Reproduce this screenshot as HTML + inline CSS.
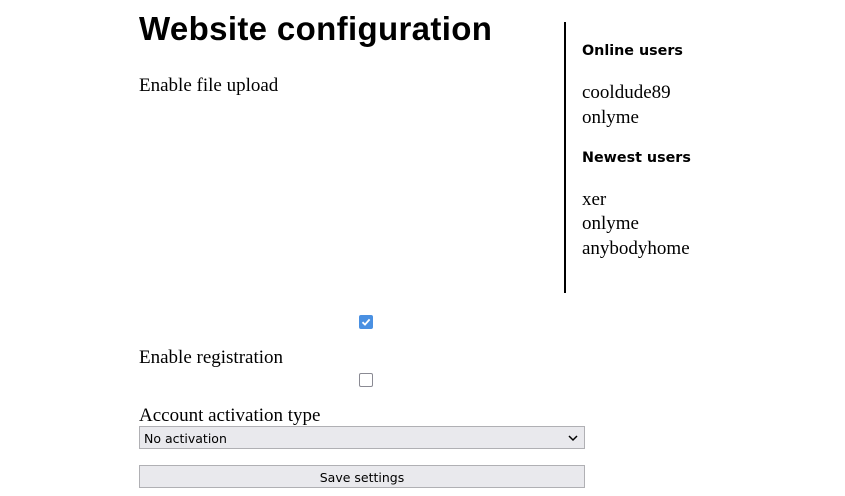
<!DOCTYPE html>
<html><head><meta charset="utf-8"><style>
body{margin:0;width:845px;height:496px;background:#fff;position:relative;overflow:hidden;color:#000}
.a{position:absolute;white-space:nowrap}
.h{font:bold 33px "Liberation Sans",sans-serif;left:139px;top:10px;letter-spacing:0.35px}
.s{font:19px/20px "Liberation Serif",serif}
.b{font:bold 14.3px/20px "DejaVu Sans",sans-serif}
.cb{position:absolute;width:12px;height:12px;border:1px solid #8a8a93;border-radius:2px;background:#fff}
.ui{position:absolute;left:139px;width:444px;border:1px solid #b0b0b4;background:#e9e9ed;font:12.5px "DejaVu Sans",sans-serif;box-sizing:border-box}
</style></head><body>
<div class="a h">Website configuration</div>
<div class="a s" style="left:139px;top:76px">Enable file upload</div>
<div class="cb" style="left:359px;top:315px;background:#4a90e2;border-color:#4a90e2">
<svg width="12" height="12" style="position:absolute;left:0;top:0"><path d="M2.5 6.2 L5 8.6 L9.6 3.4" stroke="#fff" stroke-width="1.8" fill="none"/></svg></div>
<div class="a s" style="left:139px;top:348px">Enable registration</div>
<div class="cb" style="left:359px;top:373px"></div>
<div class="a s" style="left:139px;top:406px">Account activation type</div>
<div class="ui" style="top:426px;height:23px;padding:4px 0 0 4px;width:446px">No activation
<svg width="10" height="8" style="position:absolute;right:6px;top:7px"><path d="M1 2 L5 6 L9 2" stroke="#000" stroke-width="1.5" fill="none"/></svg></div>
<div class="ui" style="top:465px;height:23px;padding-top:4px;text-align:center;width:446px">Save settings</div>
<div class="a" style="left:564px;top:22px;width:2px;height:271px;background:#000"></div>
<div class="a b" style="left:582px;top:41px">Online users</div>
<div class="a s" style="left:582px;top:83px">cooldude89</div>
<div class="a s" style="left:582px;top:108px">onlyme</div>
<div class="a b" style="left:582px;top:148px">Newest users</div>
<div class="a s" style="left:582px;top:190px">xer</div>
<div class="a s" style="left:582px;top:214px">onlyme</div>
<div class="a s" style="left:582px;top:239px">anybodyhome</div>
</body></html>
